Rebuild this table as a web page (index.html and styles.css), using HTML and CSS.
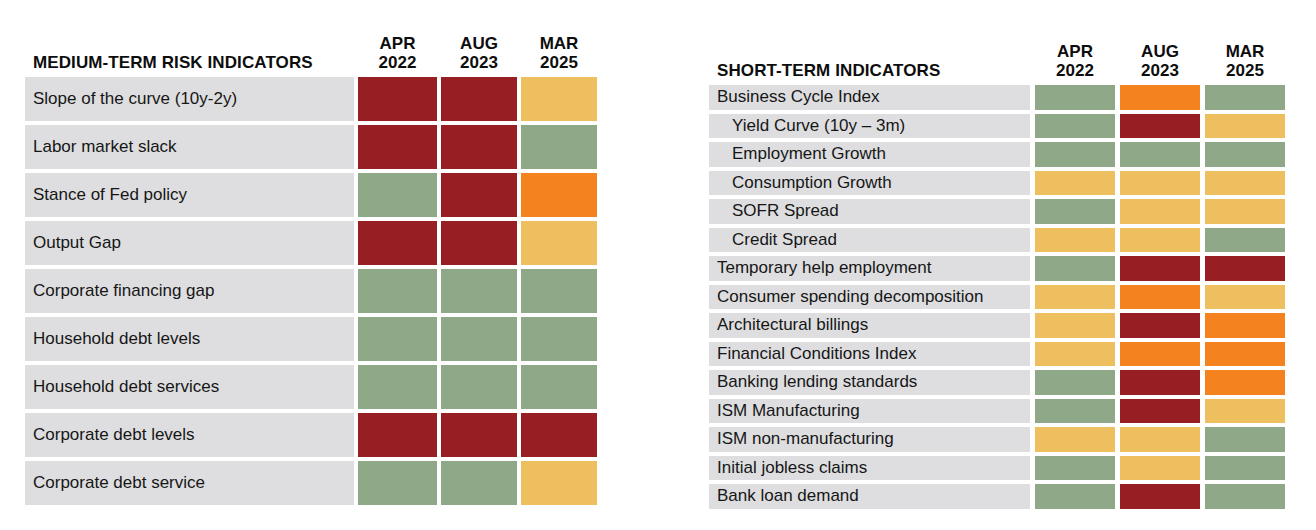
FILE: index.html
```html
<!DOCTYPE html>
<html>
<head>
<meta charset="utf-8">
<link rel="stylesheet" href="styles.css">
</head>
<body>
<div class="page">
  <div class="tbl tbl-medium">
    <div class="hd hd-title">MEDIUM-TERM RISK INDICATORS</div>
    <div class="hd hd-date">APR<br>2022</div>
    <div class="hd hd-date">AUG<br>2023</div>
    <div class="hd hd-date">MAR<br>2025</div>

    <div class="lbl">Slope of the curve (10y-2y)</div><div class="c red"></div><div class="c red"></div><div class="c yel"></div>
    <div class="lbl">Labor market slack</div><div class="c red"></div><div class="c red"></div><div class="c grn"></div>
    <div class="lbl">Stance of Fed policy</div><div class="c grn"></div><div class="c red"></div><div class="c org"></div>
    <div class="lbl">Output Gap</div><div class="c red"></div><div class="c red"></div><div class="c yel"></div>
    <div class="lbl">Corporate financing gap</div><div class="c grn"></div><div class="c grn"></div><div class="c grn"></div>
    <div class="lbl">Household debt levels</div><div class="c grn"></div><div class="c grn"></div><div class="c grn"></div>
    <div class="lbl">Household debt services</div><div class="c grn"></div><div class="c grn"></div><div class="c grn"></div>
    <div class="lbl">Corporate debt levels</div><div class="c red"></div><div class="c red"></div><div class="c red"></div>
    <div class="lbl">Corporate debt service</div><div class="c grn"></div><div class="c grn"></div><div class="c yel"></div>
  </div>

  <div class="tbl tbl-short">
    <div class="hd hd-title">SHORT-TERM INDICATORS</div>
    <div class="hd hd-date">APR<br>2022</div>
    <div class="hd hd-date">AUG<br>2023</div>
    <div class="hd hd-date">MAR<br>2025</div>

    <div class="lbl">Business Cycle Index</div><div class="c grn"></div><div class="c org"></div><div class="c grn"></div>
    <div class="lbl sub">Yield Curve (10y – 3m)</div><div class="c grn"></div><div class="c red"></div><div class="c yel"></div>
    <div class="lbl sub">Employment Growth</div><div class="c grn"></div><div class="c grn"></div><div class="c grn"></div>
    <div class="lbl sub">Consumption Growth</div><div class="c yel"></div><div class="c yel"></div><div class="c yel"></div>
    <div class="lbl sub">SOFR Spread</div><div class="c grn"></div><div class="c yel"></div><div class="c yel"></div>
    <div class="lbl sub">Credit Spread</div><div class="c yel"></div><div class="c yel"></div><div class="c grn"></div>
    <div class="lbl">Temporary help employment</div><div class="c grn"></div><div class="c red"></div><div class="c red"></div>
    <div class="lbl">Consumer spending decomposition</div><div class="c yel"></div><div class="c org"></div><div class="c yel"></div>
    <div class="lbl">Architectural billings</div><div class="c yel"></div><div class="c red"></div><div class="c org"></div>
    <div class="lbl">Financial Conditions Index</div><div class="c yel"></div><div class="c org"></div><div class="c org"></div>
    <div class="lbl">Banking lending standards</div><div class="c grn"></div><div class="c red"></div><div class="c org"></div>
    <div class="lbl">ISM Manufacturing</div><div class="c grn"></div><div class="c red"></div><div class="c yel"></div>
    <div class="lbl">ISM non-manufacturing</div><div class="c yel"></div><div class="c yel"></div><div class="c grn"></div>
    <div class="lbl">Initial jobless claims</div><div class="c grn"></div><div class="c yel"></div><div class="c grn"></div>
    <div class="lbl">Bank loan demand</div><div class="c grn"></div><div class="c red"></div><div class="c grn"></div>
  </div>
</div>
</body>
</html>
```

FILE: styles.css
```css
html, body {
  margin: 0;
  padding: 0;
  background: #ffffff;
}

.page {
  display: flex;
  align-items: flex-start;
  gap: 112px;
  padding: 34px 0 0 25px;
  font-family: "Liberation Sans", Arial, sans-serif;
  color: #161616;
}

.tbl {
  display: grid;
  row-gap: 4px;
}

.tbl-medium {
  grid-template-columns: 329px 79px 76px 76px;
  column-gap: 4px;
  grid-auto-rows: 44px;
  grid-template-rows: auto;
}

.tbl-short {
  margin-top: 8px;
  grid-template-columns: 321px 80px 80px 80px;
  column-gap: 5px;
  row-gap: 4px;
  grid-auto-rows: 24.5px;
  grid-template-rows: auto;
}

.hd {
  align-self: end;
  font-weight: bold;
  font-size: 17px;
  line-height: 19px;
  color: #0d0d0d;
  padding-bottom: 1px;
}

.hd-title {
  padding-left: 8px;
  white-space: nowrap;
  letter-spacing: 0.1px;
}

.hd-date {
  text-align: center;
}

.lbl {
  display: flex;
  align-items: center;
  padding-left: 8px;
  background: #dedee0;
  font-size: 17px;
  white-space: nowrap;
}

.lbl.sub {
  padding-left: 23px;
}

.red { background: #971e23; }
.grn { background: #8fa887; }
.yel { background: #eebf5f; }
.org { background: #f4821f; }
```
